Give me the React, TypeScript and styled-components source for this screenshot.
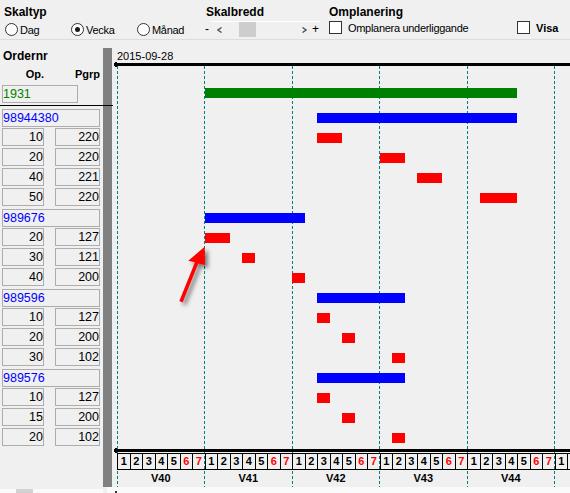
import React from 'react';
import styled, { createGlobalStyle } from 'styled-components';

const GlobalStyle = createGlobalStyle`
  html, body { margin: 0; padding: 0; background: #f0f0f0; }
  body { font-family: "Liberation Sans", Arial, sans-serif; overflow: hidden; }
`;

type Kind = 'root' | 'group' | 'op';
interface Row {
  kind: Kind;
  order?: string;
  op?: string;
  pgrp?: string;
  start: number;
  end: number;
}

const rows: Row[] = [
  { kind: 'root', order: '1931', start: 7, end: 32 },
  { kind: 'group', order: '98944380', start: 16, end: 32 },
  { kind: 'op', op: '10', pgrp: '220', start: 16, end: 18 },
  { kind: 'op', op: '20', pgrp: '220', start: 21, end: 23 },
  { kind: 'op', op: '40', pgrp: '221', start: 24, end: 26 },
  { kind: 'op', op: '50', pgrp: '220', start: 29, end: 32 },
  { kind: 'group', order: '989676', start: 7, end: 15 },
  { kind: 'op', op: '20', pgrp: '127', start: 7, end: 9 },
  { kind: 'op', op: '30', pgrp: '121', start: 10, end: 11 },
  { kind: 'op', op: '40', pgrp: '200', start: 14, end: 15 },
  { kind: 'group', order: '989596', start: 16, end: 23 },
  { kind: 'op', op: '10', pgrp: '127', start: 16, end: 17 },
  { kind: 'op', op: '20', pgrp: '200', start: 18, end: 19 },
  { kind: 'op', op: '30', pgrp: '102', start: 22, end: 23 },
  { kind: 'group', order: '989576', start: 16, end: 23 },
  { kind: 'op', op: '10', pgrp: '127', start: 16, end: 17 },
  { kind: 'op', op: '15', pgrp: '200', start: 18, end: 19 },
  { kind: 'op', op: '20', pgrp: '102', start: 22, end: 23 },
];

const DAY = 12.5;
const ORIGIN = 5; // x of day 0 inside the gantt column
const WEEK = DAY * 7;
const weeks = ['V40', 'V41', 'V42', 'V43', 'V44'];
const GRID_LINES = 6;
const VISIBLE_DAYS = 36;
const barColor: Record<Kind, string> = { root: '#008000', group: '#0000ff', op: '#ff0000' };
const dayX = (d: number) => Math.round(ORIGIN + d * DAY);

/* ---------- shell ---------- */
const Screen = styled.div`
  position: relative;
  width: 570px;
  height: 493px;
  overflow: hidden;
  display: flex;
  flex-direction: column;
  background: #f0f0f0;
  color: #000;
`;

/* ---------- header ---------- */
const Header = styled.header`
  height: 40px;
  flex: none;
  box-sizing: border-box;
  border-bottom: 1px solid #dcdcdc;
  display: flex;
`;

const Group = styled.div<{ $w?: number; $pl?: number; $pt?: number }>`
  width: ${(p) => (p.$w ? `${p.$w}px` : 'auto')};
  flex: ${(p) => (p.$w ? 'none' : '1')};
  box-sizing: border-box;
  padding: ${(p) => p.$pt ?? 5}px 0 0 ${(p) => p.$pl ?? 0}px;
  display: flex;
  flex-direction: column;
`;

const Title = styled.div`
  font-size: 12px;
  font-weight: 700;
  line-height: 14px;
  height: 14px;
  white-space: nowrap;
`;

const RadioRow = styled.div`
  display: flex;
  margin: 4px 0 0 1px;
`;

const RadioItem = styled.label`
  width: 66px;
  height: 13px;
  display: flex;
  align-items: center;
  font-size: 11px;
  letter-spacing: -0.3px;
  white-space: nowrap;
`;

const RadioCircle = styled.span<{ $on?: boolean }>`
  width: 13px;
  height: 13px;
  flex: none;
  box-sizing: border-box;
  border: 1px solid #333;
  border-radius: 50%;
  background: #fff;
  display: flex;
  align-items: center;
  justify-content: center;
  margin-right: 2px;
  &::after {
    content: '';
    width: 5px;
    height: 5px;
    border-radius: 50%;
    background: ${(p) => (p.$on ? '#1a1a1a' : 'transparent')};
  }
`;

const TrackRow = styled.div`
  display: flex;
  align-items: flex-start;
  height: 16px;
  margin: 2px 0 0 -1px;
  font-size: 12px;
  line-height: 16px;
`;

const Sign = styled.span`
  width: 5px;
  flex: none;
`;

const Track = styled.div`
  width: 110px;
  height: 16px;
  box-sizing: border-box;
  border-top: 1px solid #fff;
  display: flex;
  align-items: center;
`;

const Chevron = styled.svg<{ $ml: number }>`
  width: 5px;
  height: 6px;
  flex: none;
  margin-left: ${(p) => p.$ml}px;
`;

const Thumb = styled.div`
  width: 17px;
  height: 15px;
  flex: none;
  margin-left: 17px;
  background: #cdcdcd;
`;

const Plus = styled.span`
  margin-left: 5px;
  font-size: 12px;
  line-height: 15px;
`;

const CheckRow = styled.label<{ $bold?: boolean }>`
  display: flex;
  align-items: center;
  height: 13px;
  margin-top: 2px;
  font-size: 11px;
  font-weight: ${(p) => (p.$bold ? 700 : 400)};
  letter-spacing: ${(p) => (p.$bold ? 0 : -0.3)}px;
  white-space: nowrap;
`;

const CheckBox = styled.span`
  width: 13px;
  height: 13px;
  flex: none;
  box-sizing: border-box;
  border: 1px solid #333;
  background: #fff;
  margin-right: 6px;
`;

/* ---------- body ---------- */
const Body = styled.div`
  flex: 1;
  min-height: 0;
  display: flex;
`;

const LeftPanel = styled.div`
  width: 103px;
  flex: none;
  display: flex;
  flex-direction: column;
`;

const LeftHead = styled.div`
  height: 43px;
  flex: none;
  box-sizing: border-box;
  padding: 9px 0 0 2px;
`;

const HeadLabel = styled.div`
  font-size: 12px;
  font-weight: 700;
  line-height: 14px;
  padding-left: 1px;
`;

const ColHeads = styled.div`
  width: 98px;
  margin-top: 4px;
  display: flex;
  justify-content: space-between;
  font-size: 11px;
  font-weight: 700;
  line-height: 14px;
`;

const ColHead = styled.span<{ $w: number }>`
  width: ${(p) => p.$w}px;
  text-align: right;
`;

const LeftRows = styled.div`
  padding-left: 2px;
`;

const RootRow = styled.div`
  height: 25px;
  display: flex;
  flex-direction: column;
`;

const GroupRow = styled.div`
  height: 20px;
  padding-top: 1px;
  box-sizing: border-box;
`;

const OpRow = styled.div`
  height: 20px;
  width: 98px;
  display: flex;
  justify-content: space-between;
`;

const Field = styled.div<{ $w: number; $color?: string; $right?: boolean; $mt?: number }>`
  width: ${(p) => p.$w}px;
  height: 18px;
  margin-top: ${(p) => p.$mt ?? 0}px;
  box-sizing: border-box;
  border: 1px solid #adadad;
  background: #f0f0f0;
  font-size: 12.5px;
  line-height: 17px;
  color: ${(p) => p.$color ?? '#000'};
  text-align: ${(p) => (p.$right ? 'right' : 'left')};
  white-space: nowrap;
  overflow: hidden;
`;

const Divider = styled.div`
  position: relative;
  z-index: 2;
  width: 113px;
  height: 1px;
  margin: 2px 0 0 -2px;
  background: #000;
`;

const LeftFill = styled.div`
  flex: 1;
`;

const LeftScroll = styled.div`
  height: 4px;
  flex: none;
  background: #fafafa;
  display: flex;
`;

const LeftScrollThumb = styled.div`
  width: 17px;
  margin-left: 16px;
  background: #d2d2d2;
`;

const Splitter = styled.div`
  width: 9px;
  flex: none;
  margin: 8px 0 6px;
  background: #808080;
`;

/* ---------- gantt ---------- */
const Gantt = styled.div`
  position: relative;
  flex: 1;
  min-width: 0;
  display: flex;
  flex-direction: column;
`;

const GridLine = styled.div`
  position: absolute;
  top: 26px;
  bottom: 0;
  width: 1px;
  background: repeating-linear-gradient(to bottom, #008080 0 3px, transparent 3px 5px);
`;

const GanttHead = styled.div`
  height: 43px;
  flex: none;
  box-sizing: border-box;
  padding-top: 10px;
`;

const DateLabel = styled.div`
  margin-left: ${ORIGIN}px;
  font-size: 11px;
  line-height: 13px;
  height: 13px;
`;

const Rule = styled.div<{ $mt?: number }>`
  position: relative;
  height: 3px;
  flex: none;
  margin: ${(p) => p.$mt ?? 0}px 0 0 2px;
  background: #000;
  &::before {
    content: '';
    position: absolute;
    left: 1px;
    top: -1px;
    width: 2px;
    height: 5px;
    background: #000;
  }
`;

const GanttRow = styled.div<{ $h: number }>`
  height: ${(p) => p.$h}px;
  display: flex;
  align-items: flex-start;
`;

const Bar = styled.div<{ $color: string }>`
  position: relative;
  height: 10px;
  margin-top: 5px;
  flex: none;
  background: ${(p) => p.$color};
`;

const DayStrip = styled.div`
  height: 17px;
  flex: none;
  margin: 1px 0 0 ${ORIGIN}px;
  box-sizing: border-box;
  border-top: 1px solid #000;
  border-bottom: 1px solid #000;
  display: flex;
  position: relative;
`;

const DayCell = styled.div<{ $weekend: boolean }>`
  width: ${DAY}px;
  flex: none;
  box-sizing: border-box;
  border-left: 1px solid #000;
  font-size: 11px;
  font-weight: 700;
  line-height: 15px;
  text-align: center;
  color: ${(p) => (p.$weekend ? '#ff0000' : '#000')};
`;

const DayFiller = styled.div`
  flex: 1;
  border-left: 1px solid #000;
`;

const WeekStrip = styled.div`
  height: 17px;
  flex: none;
  margin-left: ${ORIGIN}px;
  display: flex;
  position: relative;
`;

const WeekLabel = styled.div`
  width: ${WEEK}px;
  flex: none;
  font-size: 11px;
  font-weight: 700;
  line-height: 17px;
  text-align: center;
`;

const GanttScroll = styled.div`
  height: 6px;
  flex: none;
  margin-left: -5px;
  background: #fafafa;
  position: relative;
  display: flex;
  align-items: flex-end;
`;

const ScrollMark = styled.div`
  width: 2px;
  height: 2px;
  margin: 0 0 0 8px;
  background: #333;
`;

const ArrowOverlay = styled.svg`
  position: absolute;
  left: 170px;
  top: 235px;
  width: 50px;
  height: 75px;
  overflow: visible;
  pointer-events: none;
`;

export default function App() {
  const days = Array.from({ length: VISIBLE_DAYS }, (_, i) => i);
  const grid = Array.from({ length: GRID_LINES }, (_, i) => i);
  return (
    <Screen>
      <GlobalStyle />
      <Header>
        <Group $w={205} $pl={4}>
          <Title>Skaltyp</Title>
          <RadioRow>
            <RadioItem>
              <RadioCircle />
              Dag
            </RadioItem>
            <RadioItem>
              <RadioCircle $on />
              Vecka
            </RadioItem>
            <RadioItem>
              <RadioCircle />
              Månad
            </RadioItem>
          </RadioRow>
        </Group>
        <Group $w={124} $pl={1}>
          <Title>Skalbredd</Title>
          <TrackRow>
            <Sign>-</Sign>
            <Track>
              <Chevron $ml={7} viewBox="0 0 5 6">
                <polyline points="4.5,0.5 1,3 4.5,5.5" fill="none" stroke="#555" strokeWidth="1.4" />
              </Chevron>
              <Thumb />
              <Chevron $ml={46} viewBox="0 0 5 6">
                <polyline points="0.5,0.5 4,3 0.5,5.5" fill="none" stroke="#555" strokeWidth="1.4" />
              </Chevron>
              <Plus>+</Plus>
            </Track>
          </TrackRow>
        </Group>
        <Group>
          <Title>Omplanering</Title>
          <CheckRow>
            <CheckBox />
            Omplanera underliggande
          </CheckRow>
        </Group>
        <Group $w={53} $pt={19}>
          <CheckRow $bold>
            <CheckBox />
            Visa
          </CheckRow>
        </Group>
      </Header>

      <Body>
        <LeftPanel>
          <LeftHead>
            <HeadLabel>Ordernr</HeadLabel>
            <ColHeads>
              <ColHead $w={42}>Op.</ColHead>
              <ColHead $w={45}>Pgrp</ColHead>
            </ColHeads>
          </LeftHead>
          <LeftRows>
            {rows.map((r, i) => {
              if (r.kind === 'root')
                return (
                  <RootRow key={i}>
                    <Field $w={76} $mt={2} $color="#008000">
                      {r.order}
                    </Field>
                    <Divider />
                  </RootRow>
                );
              if (r.kind === 'group')
                return (
                  <GroupRow key={i}>
                    <Field $w={98} $color="#0000ff">
                      {r.order}
                    </Field>
                  </GroupRow>
                );
              return (
                <OpRow key={i}>
                  <Field $w={42} $right>
                    {r.op}
                  </Field>
                  <Field $w={45} $right>
                    {r.pgrp}
                  </Field>
                </OpRow>
              );
            })}
          </LeftRows>
          <LeftFill />
          <LeftScroll>
            <LeftScrollThumb />
          </LeftScroll>
        </LeftPanel>

        <Splitter />

        <Gantt>
          {grid.map((k) => (
            <GridLine key={k} style={{ left: Math.floor(ORIGIN + k * WEEK) }} />
          ))}
          <GanttHead>
            <DateLabel>2015-09-28</DateLabel>
            <Rule />
          </GanttHead>
          {rows.map((r, i) => (
            <GanttRow key={i} $h={r.kind === 'root' ? 25 : 20}>
              <Bar
                $color={barColor[r.kind]}
                style={{ marginLeft: dayX(r.start), width: dayX(r.end) - dayX(r.start) }}
              />
            </GanttRow>
          ))}
          <Rule $mt={1} />
          <DayStrip>
            {days.map((d) => (
              <DayCell key={d} $weekend={d % 7 >= 5}>
                {(d % 7) + 1}
              </DayCell>
            ))}
            <DayFiller />
          </DayStrip>
          <WeekStrip>
            {weeks.map((w) => (
              <WeekLabel key={w}>{w}</WeekLabel>
            ))}
          </WeekStrip>
          <GanttScroll>
            <ScrollMark />
          </GanttScroll>
        </Gantt>
      </Body>

      <ArrowOverlay viewBox="0 0 50 75">
        <defs>
          <filter id="arrowShadow" x="-60%" y="-60%" width="220%" height="220%">
            <feDropShadow dx="3" dy="3" stdDeviation="2" floodColor="#000" floodOpacity="0.5" />
          </filter>
        </defs>
        <polygon
          points="34.7,11.7 35,30 28.25,28.6 12.65,67.4 9.35,66 24.95,27.2 18.3,25.7"
          fill="#ff0000"
          filter="url(#arrowShadow)"
        />
      </ArrowOverlay>
    </Screen>
  );
}
